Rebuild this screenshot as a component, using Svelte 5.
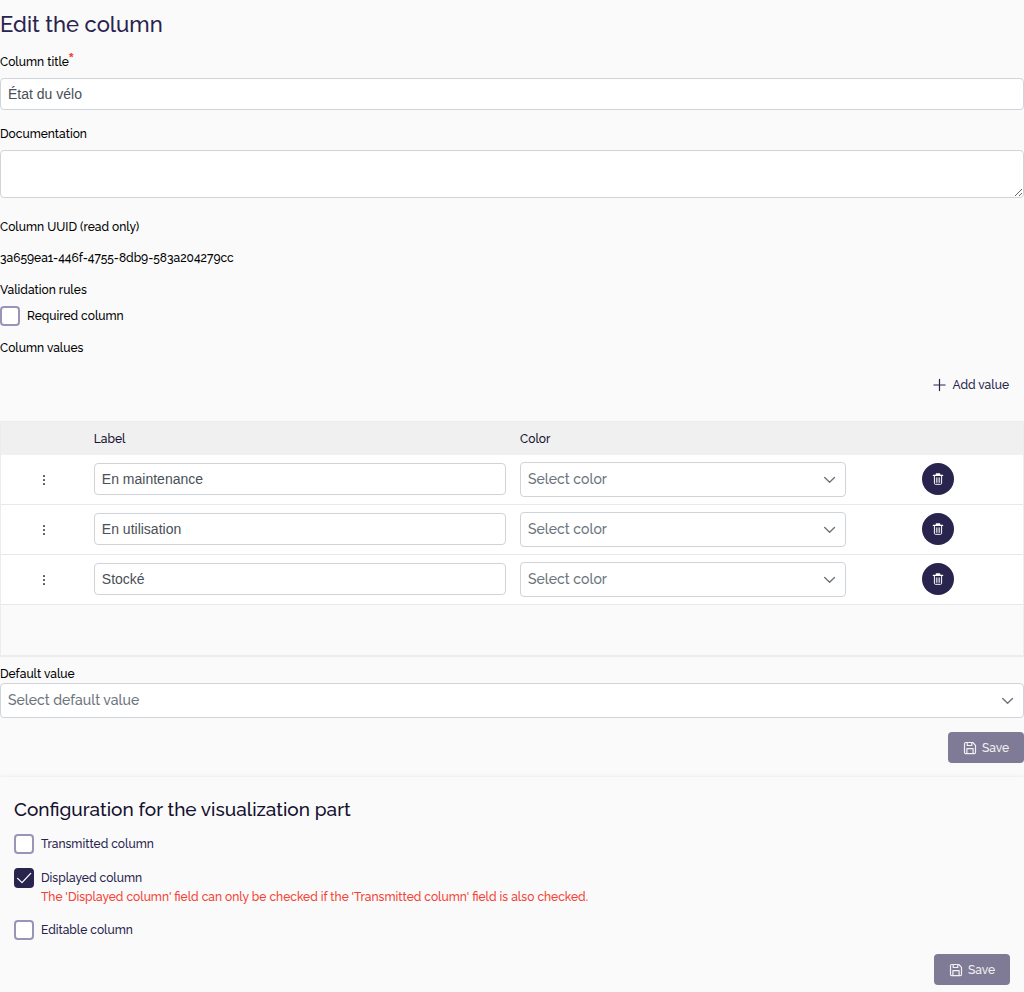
<script>
  let title = $state('État du vélo');
  let documentation = $state('');
  let rows = $state([
    { id: 1, label: 'En maintenance', color: '' },
    { id: 2, label: 'En utilisation', color: '' },
    { id: 3, label: 'Stocké', color: '' }
  ]);
  let required = $state(false);
  let defaultValue = $state('');
  let transmitted = $state(false);
  let displayed = $state(true);
  let editable = $state(false);
  let nextId = 4;

  function addValue() {
    rows.push({ id: nextId++, label: '', color: '' });
  }

  function removeValue(id) {
    rows = rows.filter((row) => row.id !== id);
  }
</script>

{#snippet chevron()}
  <svg class="chevron" viewBox="0 0 14 14" aria-hidden="true">
    <path d="M1.7 4.4 6.6 9.2l4.9-4.8" fill="none" stroke="currentColor" stroke-width="1.4" stroke-linecap="round" stroke-linejoin="round" />
  </svg>
{/snippet}

{#snippet checkmark()}
  <svg class="mark" viewBox="0 0 20 20" aria-hidden="true">
    <path d="M3.6 10.4 8 14.6 16.7 5.4" fill="none" stroke="currentColor" stroke-width="1.3" stroke-linecap="round" stroke-linejoin="round" />
  </svg>
{/snippet}

{#snippet saveButton()}
  <button class="save" type="submit" disabled>
    <svg class="icon" viewBox="0 0 14 14" aria-hidden="true">
      <g fill="none" stroke="currentColor" stroke-width="1.2" stroke-linejoin="round">
        <path d="M2.6 1.5h7.2l2.7 2.9v7c0 .7-.5 1.2-1.2 1.2H2.7c-.7 0-1.2-.5-1.2-1.2V2.6c0-.6.5-1.1 1.1-1.1z" />
        <path d="M4.2 1.5v3h4.6v-3" />
        <path d="M3.9 12.5V7.7h6.2v4.8" />
      </g>
    </svg>
    Save
  </button>
{/snippet}

<main class="page">
  <form class="column-form">
    <h1>Edit the column</h1>

    <div class="field">
      <label for="title">Column title<sup>*</sup></label>
      <input id="title" class="text" type="text" bind:value={title} />
    </div>

    <div class="field">
      <label for="documentation">Documentation</label>
      <textarea id="documentation" class="text" bind:value={documentation}></textarea>
    </div>

    <div class="details">
      <p>Column UUID (read only)</p>
      <p>3a659ea1-446f-4755-8db9-583a204279cc</p>
    </div>
    <p class="rules-title">Validation rules</p>
    <div class="check plain">
      <span class="box"><input id="required" type="checkbox" bind:checked={required} />{@render checkmark()}</span>
      <label for="required">Required column</label>
    </div>
    <p>Column values</p>

    <div class="toolbar">
      <button class="add" type="button" onclick={addValue}>
        <svg class="icon" viewBox="0 0 14 14" aria-hidden="true">
          <path d="M6.5 1.4v11.2M.9 7h11.2" fill="none" stroke="currentColor" stroke-width="1.2" stroke-linecap="round" />
        </svg>
        Add value
      </button>
    </div>

    <div class="table-wrap">
      <table>
        <colgroup>
          <col class="c-handle" /><col class="c-label" /><col class="c-color" /><col class="c-action" />
        </colgroup>
        <thead>
          <tr><th></th><th scope="col">Label</th><th scope="col">Color</th><th></th></tr>
        </thead>
        <tbody>
          {#each rows as row (row.id)}
            <tr>
              <td class="grip">
                <svg class="handle" viewBox="0 0 14 14" aria-hidden="true">
                  <rect x="6" y="2" width="2" height="2" rx=".4" /><rect x="6" y="6" width="2" height="2" rx=".4" /><rect x="6" y="10" width="2" height="2" rx=".4" />
                </svg>
              </td>
              <td class="inset"><input class="text" type="text" aria-label="Label" bind:value={row.label} /></td>
              <td>
                <div class="select">
                  <select aria-label="Color" bind:value={row.color}>
                    <option value="">Select color</option>
                  </select>
                  {@render chevron()}
                </div>
              </td>
              <td class="inset">
                <button class="delete" type="button" aria-label="Delete" onclick={() => removeValue(row.id)}>
                  <svg viewBox="0 0 12 12" aria-hidden="true">
                    <g fill="none" stroke="currentColor" stroke-linecap="round" stroke-linejoin="round">
                      <path d="M1.4 2.4h9.2M4.4 2V1h3.2v1" stroke-width="1.4" />
                      <path d="M2.4 3v7.4c0 .5.4.9.9.9h5.4c.5 0 .9-.4.9-.9V3" stroke-width="1" />
                      <path d="M4.4 4.8v4.6M6 4.8v4.6M7.6 4.8v4.6" stroke-width=".8" />
                    </g>
                  </svg>
                </button>
              </td>
            </tr>
          {/each}
        </tbody>
      </table>
    </div>

    <div class="default">
      <label for="default">Default value</label>
      <div class="select">
        <select id="default" bind:value={defaultValue}>
          <option value="">Select default value</option>
          {#each rows as row (row.id)}
            <option value={row.label}>{row.label}</option>
          {/each}
        </select>
        {@render chevron()}
      </div>
    </div>
    <div class="actions">{@render saveButton()}</div>
  </form>

  <form class="config">
    <h2>Configuration for the visualization part</h2>
    <div class="check">
      <span class="box"><input id="transmitted" type="checkbox" bind:checked={transmitted} />{@render checkmark()}</span>
      <label for="transmitted">Transmitted column</label>
    </div>
    <div class="check">
      <span class="box"><input id="displayed" type="checkbox" bind:checked={displayed} aria-describedby="displayed-error" />{@render checkmark()}</span>
      <label for="displayed">Displayed column</label>
      <p id="displayed-error" class="error">The 'Displayed column' field can only be checked if the 'Transmitted column' field is also checked.</p>
    </div>
    <div class="check">
      <span class="box"><input id="editable" type="checkbox" bind:checked={editable} />{@render checkmark()}</span>
      <label for="editable">Editable column</label>
    </div>
    <div class="actions">{@render saveButton()}</div>
  </form>
</main>

<style>
  :global(body) {
    margin: 0;
    background: #fafafa;
  }
  .page {
    color: #000;
    font: 500 12px/16px Raleway, Lato, sans-serif;
  }
  .page * {
    box-sizing: border-box;
  }
  h1, h2, p {
    margin: 0;
    font-weight: 500;
  }
  h1 {
    padding-top: 10px;
    margin-bottom: 16px;
    color: #29244e;
    font-size: 22px;
    line-height: 28px;
  }
  .field {
    display: flex;
    flex-direction: column;
    gap: 8px;
    margin-bottom: 16px;
  }
  .field label {
    line-height: 16px;
  }
  sup {
    color: #f44336;
    font-size: 19px;
    font-weight: 700;
    line-height: 0;
    margin-left: -1px;
    vertical-align: baseline;
  }
  .text {
    display: block;
    width: 100%;
    height: 32px;
    margin: 0;
    padding: 7px;
    border: 1px solid #ced4da;
    border-radius: 4px;
    background: #fff;
    color: #495057;
    font: 14px/16px "Liberation Sans", Arial, sans-serif;
  }
  textarea.text {
    height: 48px;
  }
  .details {
    display: flex;
    flex-direction: column;
    gap: 15px;
    padding-top: 5px;
  }
  .rules-title {
    margin-top: 16px;
  }
  .check {
    display: grid;
    grid-template-columns: 20px 1fr;
    column-gap: 7px;
    align-items: center;
    margin-bottom: 14px;
    color: #29244e;
  }
  .check.plain {
    margin-top: 8px;
    color: #000;
  }
  .box {
    display: grid;
    width: 20px;
    height: 20px;
  }
  .box input {
    grid-area: 1 / 1;
    appearance: none;
    width: 20px;
    height: 20px;
    margin: 0;
    border: 2px solid #9b94b7;
    border-radius: 4px;
    background: #fff;
  }
  .box input:checked {
    border-color: #29244e;
    background: #29244e;
  }
  .mark {
    grid-area: 1 / 1;
    width: 20px;
    height: 20px;
    color: #fff;
    pointer-events: none;
    visibility: hidden;
  }
  .box input:checked + .mark {
    visibility: visible;
  }
  .error {
    grid-column: 2;
    color: #f44336;
    line-height: 18px;
  }
  .toolbar {
    display: flex;
    justify-content: flex-end;
    padding: 13px 0 21px;
  }
  button {
    display: flex;
    align-items: center;
    justify-content: center;
    border: 0;
    border-radius: 4px;
    font: inherit;
  }
  .icon {
    width: 14px;
    height: 14px;
  }
  .add, .save {
    gap: 6px;
    height: 31px;
    padding: 0 15px;
  }
  .add {
    background: none;
    color: #29244e;
  }
  .save {
    gap: 5px;
    background: #7f7a95;
    color: #f1f0f4;
  }
  .actions {
    display: flex;
    justify-content: flex-end;
  }
  .table-wrap {
    min-height: 236px;
    border: 1px solid #ececee;
    border-bottom-width: 2px;
  }
  table {
    width: 100%;
    border-spacing: 0;
    table-layout: fixed;
  }
  .c-handle { width: 8.4%; }
  .c-label { width: 41.7%; }
  .c-color { width: 33.3%; }
  .c-action { width: 16.6%; }
  th {
    height: 33px;
    padding: 0 7px;
    background: #f0f0f0;
    color: #15112e;
    font-weight: 500;
    text-align: left;
  }
  tbody tr {
    background: #fff;
  }
  td {
    height: 50px;
    padding: 7px;
    border-bottom: 1px solid #e6e8ea;
    vertical-align: top;
  }
  td.inset {
    padding-top: 8px;
  }
  td.grip {
    vertical-align: middle;
  }
  .handle {
    display: block;
    width: 14px;
    height: 14px;
    margin: 0 auto;
    fill: #495057;
  }
  .select {
    display: grid;
    align-items: center;
  }
  .select select {
    grid-area: 1 / 1;
    appearance: none;
    width: 100%;
    height: 35px;
    margin: 0;
    padding: 0 36px 1px 7px;
    border: 1px solid #ced4da;
    border-radius: 4px;
    background: #fff;
    color: #6c757d;
    font: 500 14px/18px Raleway, Lato, sans-serif;
  }
  .chevron {
    grid-area: 1 / 1;
    justify-self: end;
    width: 14px;
    height: 14px;
    margin-right: 9px;
    color: #6c757d;
    pointer-events: none;
  }
  .delete {
    width: 32px;
    height: 32px;
    margin: 0 auto;
    padding: 0;
    border-radius: 50%;
    background: #29244e;
    color: #fff;
  }
  .delete svg {
    width: 12px;
    height: 12px;
  }
  .default {
    display: flex;
    flex-direction: column;
    gap: 1px;
    padding: 9px 0 14px;
  }
  .config {
    margin-top: 14px;
    padding: 20px 14px 7px;
    box-shadow: 0 0 4px rgba(0, 0, 0, 0.09);
  }
  h2 {
    margin-bottom: 12px;
    color: #15112e;
    font-size: 19px;
    line-height: 25px;
  }
</style>
